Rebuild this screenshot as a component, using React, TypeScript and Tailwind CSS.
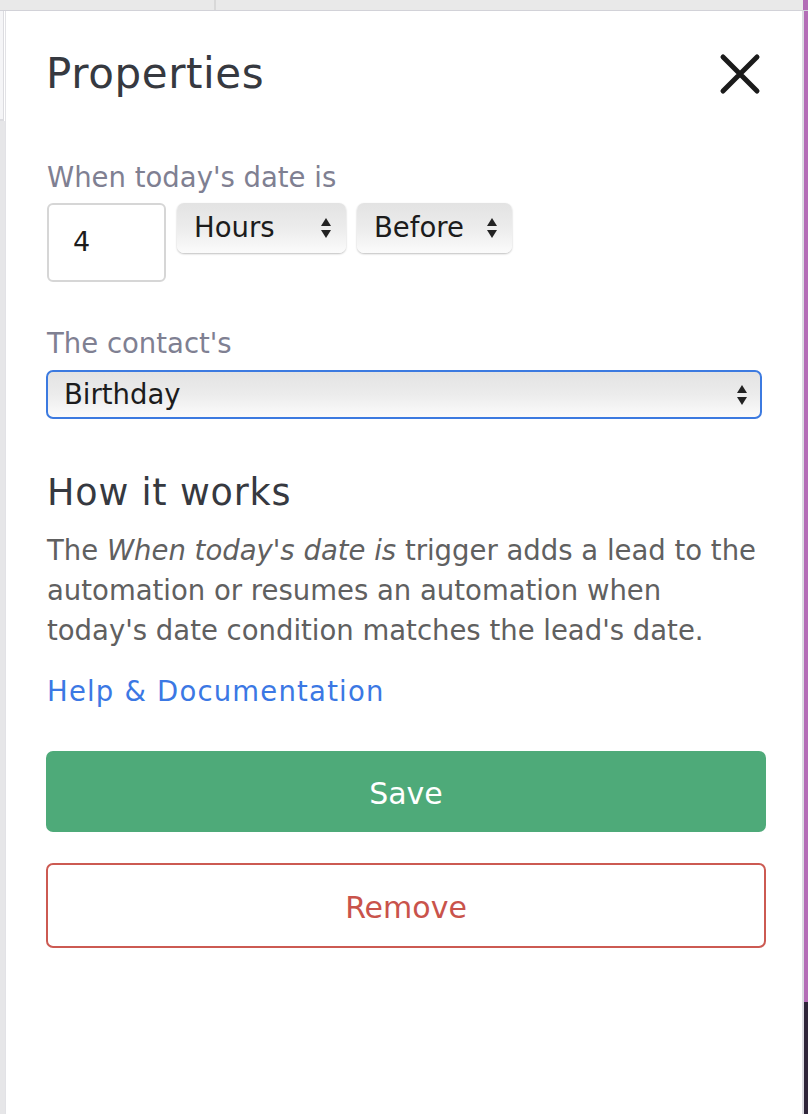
import React from 'react'

function Arrows() {
  return (
    <svg width="12" height="22" viewBox="0 0 12 22" className="shrink-0">
      <path d="M6 1 L11 9 L1 9 Z" fill="#222" />
      <path d="M6 21 L11 13 L1 13 Z" fill="#222" />
    </svg>
  )
}

function FakeSelect({ label, className }: { label: string; className: string }) {
  return (
    <div
      className={`flex items-center justify-between rounded-[7px] bg-gradient-to-b from-[#e3e3e3] via-[#ececec] to-[#fbfbfb] shadow-[0_1px_2px_rgba(0,0,0,0.25)] ${className}`}
    >
      <span className="text-[27.5px] leading-none text-[#1c1c1c]">{label}</span>
      <Arrows />
    </div>
  )
}

export default function App() {
  return (
    <div
      className="w-[808px] h-[1114px] flex flex-col bg-white overflow-hidden"
      style={{ fontFamily: '"DejaVu Sans", "Open Sans", sans-serif' }}
    >
      {/* top strip */}
      <div className="h-[11px] flex shrink-0 border-b border-[#d2d2d8] bg-[#e9e9e9]">
        <div className="w-[216px] border-r-2 border-[#d8d8d8]" />
        <div className="flex-1" />
        <div className="w-[5px] bg-[#b36db6]" />
      </div>

      <div className="flex flex-1 min-h-0">
        {/* left strip */}
        <div className="w-[5px] flex flex-col">
          <div className="h-[110px] w-[4px] bg-[#f5f5f7] border-r border-b-2 border-[#dcdce0]" />
          <div className="flex-1 bg-[#e6e6e8]" />
        </div>

        {/* panel */}
        <div className="flex-1 border-l border-[#e2e2e6] bg-white pl-[41px] pr-[35px] pt-[40px]">
          <div className="flex items-center justify-between">
            <h1 className="text-[42px] leading-[46px] text-[#363940] tracking-[0.6px] -ml-[1px]">Properties</h1>
            <svg width="42" height="42" viewBox="0 0 42 42" className="mr-[6px]">
              <path d="M4 4 L38 38 M38 4 L4 38" stroke="#1b1b1b" strokeWidth="5" strokeLinecap="round" />
            </svg>
          </div>

          <div className="mt-[65px] text-[27.5px] leading-[30px] text-[#7f8092]">When today's date is</div>
          <div className="mt-[11px] flex items-start gap-[11px]">
            <div className="w-[119px] h-[79px] rounded-[6px] border-2 border-[#d6d6d6] flex items-center pl-[24px] text-[27px] text-[#1c1c1c]">
              4
            </div>
            <FakeSelect label="Hours" className="w-[169px] h-[50px] pl-[17px] pr-[14px]" />
            <FakeSelect label="Before" className="w-[155px] h-[50px] pl-[17px] pr-[14px]" />
          </div>

          <div className="mt-[46px] text-[27.5px] leading-[30px] text-[#7f8092]">The contact's</div>
          <div className="mt-[12px] pr-[5px]">
            <div className="h-[49px] rounded-[7px] border-2 border-[#3c7ae0] bg-gradient-to-b from-[#e3e3e3] via-[#ececec] to-[#fbfbfb] flex items-center justify-between pl-[16px] pr-[12px] -ml-[1px]">
              <span className="text-[27.5px] leading-none text-[#1c1c1c]">Birthday</span>
              <Arrows />
            </div>
          </div>

          <h2 className="mt-[54px] text-[36.5px] leading-[40px] text-[#363940] tracking-[0.8px]">How it works</h2>
          <p className="mt-[17px] text-[27.5px] leading-[40px] text-[#606060] whitespace-nowrap">
            The <em>When today's date is</em> trigger adds a lead to the
            <br />
            automation or resumes an automation when
            <br />
            today's date condition matches the lead's date.
          </p>
          <div className="mt-[21px] text-[27.5px] leading-[40px] text-[#3b78e4] tracking-[1.2px]">Help &amp; Documentation</div>

          <button className="mt-[40px] w-full h-[81px] pt-[3px] rounded-[7px] bg-[#4eaa79] text-white text-[30px] -ml-[1px]">Save</button>
          <button className="mt-[31px] w-full h-[85px] pt-[3px] rounded-[7px] border-2 border-[#cc5a52] text-[#c9534b] text-[30px] bg-white -ml-[1px]">Remove</button>
        </div>

        {/* right edge */}
        <div className="w-[2px] bg-[#dcdce2]" />
        <div className="w-[4px] flex flex-col">
          <div className="h-[991px] bg-[#b36db6]" />
          <div className="flex-1 bg-[#2e2539]" />
        </div>
      </div>
    </div>
  )
}
